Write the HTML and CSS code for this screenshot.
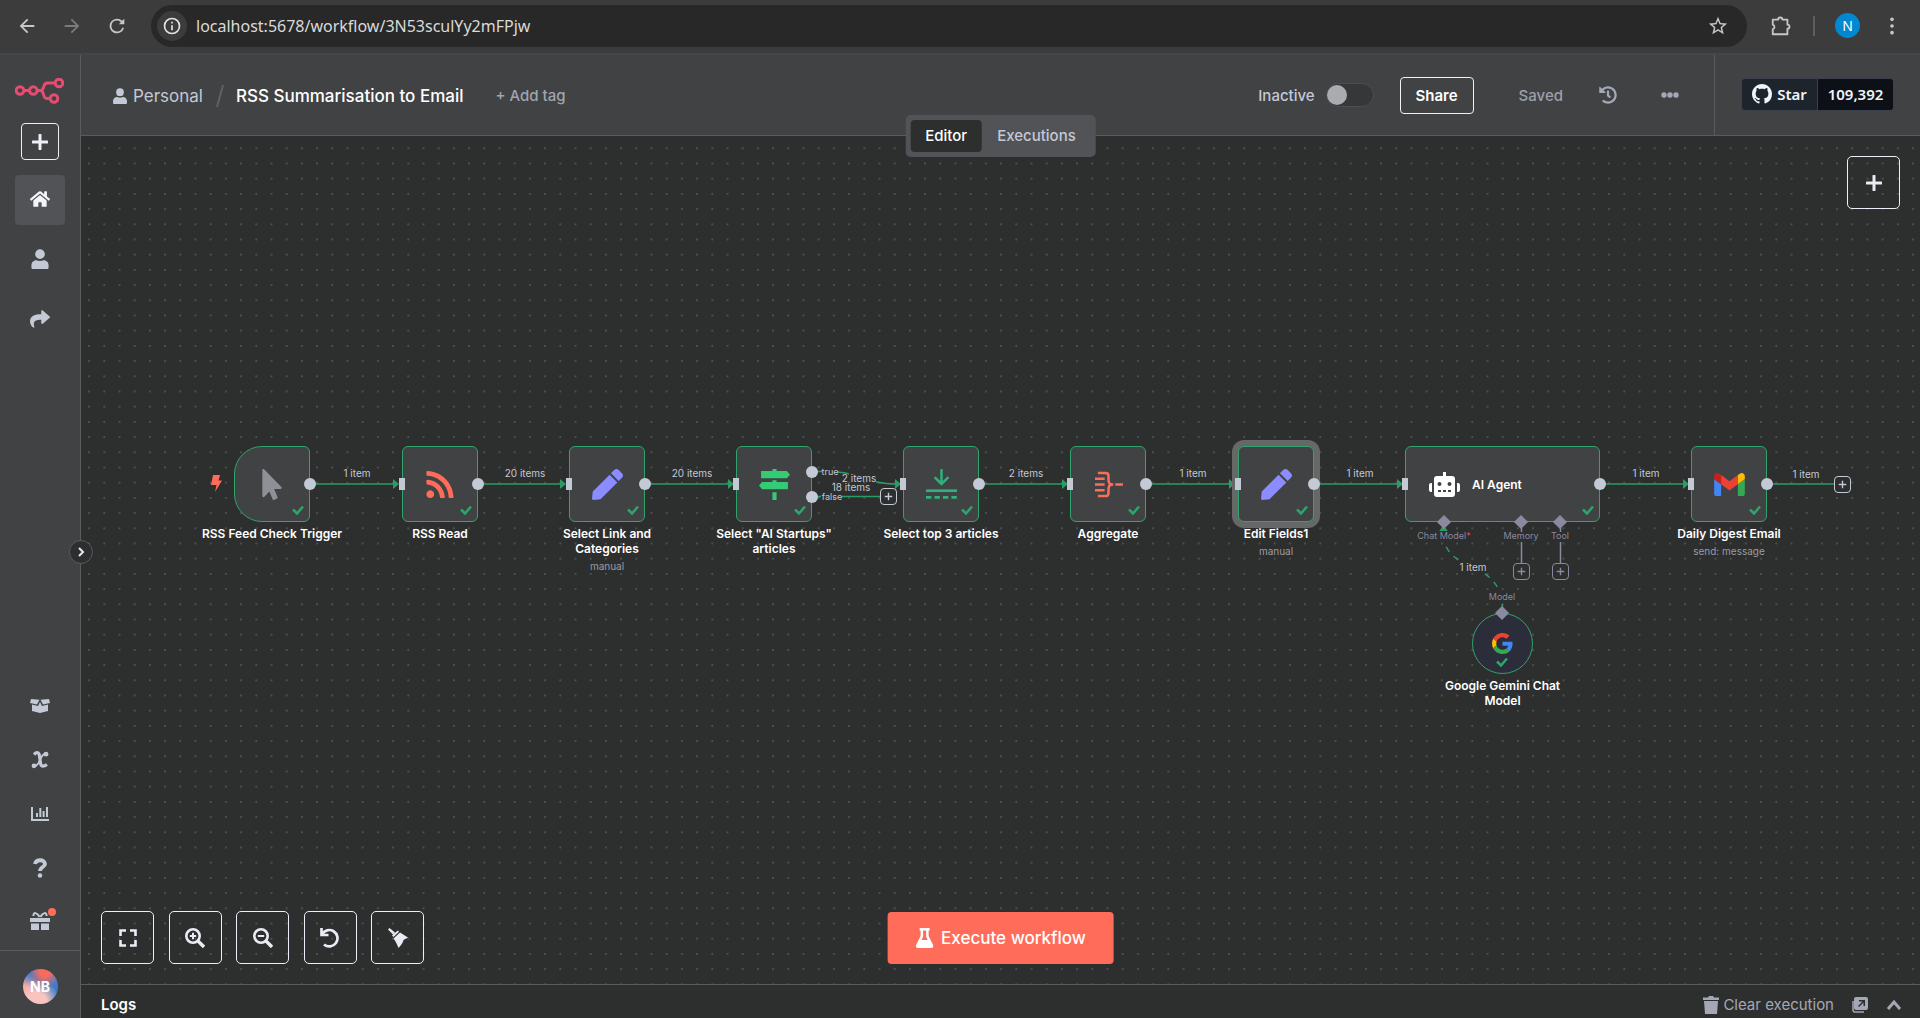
FILE: index.html
```html
<!DOCTYPE html>
<html lang="en">
<head>
<meta charset="utf-8">
<title>RSS Summarisation to Email - n8n</title>
<meta name="viewport" content="width=device-width, initial-scale=1">
<link rel="stylesheet" href="styles.css">
</head>
<body>
<svg class="defs" aria-hidden="true">
  <symbol id="user" viewBox="0 0 448 512"><path d="M224 256a124 124 0 1 0 0-248 124 124 0 0 0 0 248zm95 32c-60 24-130 24-190 0C60 288 0 348 0 422v50c0 24 16 40 40 40h368c24 0 40-16 40-40v-50c0-74-60-134-129-134z"/></symbol>
  <symbol id="plus" viewBox="0 0 16 16"><path d="M8 1v14M1 8h14" fill="none" stroke="currentColor" stroke-width="3" stroke-linecap="round"/></symbol>
  <symbol id="check" viewBox="0 0 12 10"><path d="M1 4.500l4 4 6-7" fill="none" stroke="currentColor" stroke-width="2.500"/></symbol>
  <symbol id="pen" viewBox="0 0 512 512"><path d="M290.740 93.240l128.020 128.020-277.990 277.990-114.140 12.600C11.350 513.540-1.560 500.620.140 485.340l12.700-114.220 277.900-277.880zm207.200-19.060l-60.110-60.110c-18.750-18.750-49.160-18.750-67.910 0l-56.550 56.550 128.020 128.020 56.550-56.550c18.750-18.760 18.750-49.160 0-67.910z"/></symbol>
  <symbol id="smallplus" viewBox="0 0 16 16"><path d="M8 4v8M4 8h8" fill="none" stroke="currentColor" stroke-width="1.500"/></symbol>
</svg>

<header class="browser">
  <button class="nav-btn" aria-label="Back"><svg viewBox="0 0 24 24"><path d="M20 11H7.830l5.590-5.590L12 4l-8 8 8 8 1.410-1.410L7.830 13H20v-2z"/></svg></button>
  <button class="nav-btn disabled" aria-label="Forward"><svg viewBox="0 0 24 24"><path d="M12 4l-1.410 1.410L16.170 11H4v2h12.170l-5.580 5.590L12 20l8-8z"/></svg></button>
  <button class="nav-btn" aria-label="Reload"><svg viewBox="0 0 24 24"><path d="M17.650 6.350A8 8 0 1 0 19.730 14h-2.080A6 6 0 1 1 12 6c1.660 0 3.140.690 4.220 1.780L14 10h6V4z"/></svg></button>
  <div class="address">
    <button class="info" aria-label="Site information"><svg viewBox="0 0 24 24"><path d="M11 17h2v-6h-2v6zm0-8h2V7h-2v2zm1-7a10 10 0 1 0 0 20 10 10 0 0 0 0-20zm0 18a8 8 0 1 1 0-16 8 8 0 0 1 0 16z"/></svg></button>
    <input class="url" type="text" aria-label="Address" value="localhost:5678/workflow/3N53sculYy2mFPjw">
    <button class="nav-btn" aria-label="Bookmark"><svg viewBox="0 0 24 24"><path d="M22 9.240l-7.190-.620L12 2 9.190 8.630 2 9.240l5.460 4.730L5.820 21 12 17.270 18.180 21l-1.630-7.030L22 9.240zM12 15.400l-3.760 2.270 1-4.280-3.320-2.880 4.380-.380L12 6.100l1.710 4.040 4.380.380-3.320 2.880 1 4.280L12 15.400z"/></svg></button>
  </div>
  <button class="nav-btn ext" aria-label="Extensions"><svg viewBox="0 0 24 24"><path d="M3 5h6a2 2 0 0 1 4.500 0H19v5.500a2 2 0 0 1 0 4.500V21H3v-5.500a2.600 2.600 0 0 0 0-5z" fill="none" stroke="currentColor" stroke-width="2" stroke-linejoin="round"/></svg></button>
  <span class="bar-line"></span>
  <button class="profile" aria-label="Profile">N</button>
  <button class="nav-btn menu" aria-label="Menu"><svg viewBox="0 0 24 24"><circle cx="12" cy="4" r="2.200"/><circle cx="12" cy="12" r="2.200"/><circle cx="12" cy="20" r="2.200"/></svg></button>
</header>

<div class="app">
  <aside class="sidebar">
    <a class="logo" href="#" aria-label="n8n"><svg viewBox="0 0 50 26"><g fill="none" stroke="#ea4b71" stroke-width="2.900"><circle cx="5" cy="12.500" r="3.800"/><circle cx="18.300" cy="12.500" r="3.800"/><circle cx="44" cy="5" r="3.800"/><circle cx="39" cy="20.500" r="3.800"/><path d="M9 12.500h5M22.500 12.500h3c5 0 1-7.500 7-7.500h7.500M25.500 12.500c4 0 2 8 6 8H35"/></g></svg></a>
    <button class="new" aria-label="Create"><svg viewBox="0 0 16 16"><use href="#plus"/></svg></button>
    <nav class="side-nav">
      <a class="side-item active" href="#" aria-label="Overview"><svg viewBox="0 0 576 512"><path d="M280.370 148.260L96 300.110V464a16 16 0 0 0 16 16l112.060-.290a16 16 0 0 0 15.920-16V368a16 16 0 0 1 16-16h64a16 16 0 0 1 16 16v95.640a16 16 0 0 0 16 16.050L464 480a16 16 0 0 0 16-16V300L295.670 148.260a12.190 12.190 0 0 0-15.300 0zM571.600 251.470L488 182.560V44.050a12 12 0 0 0-12-12h-56a12 12 0 0 0-12 12v72.610L318.470 43a48 48 0 0 0-61 0L4.340 251.470a12 12 0 0 0-1.600 16.900l25.500 31A12 12 0 0 0 45.150 301l235.220-193.740a12.190 12.190 0 0 1 15.300 0L530.900 301a12 12 0 0 0 16.900-1.600l25.500-31a12 12 0 0 0-1.700-16.930z"/></svg></a>
      <a class="side-item" href="#" aria-label="Personal"><svg viewBox="0 0 448 512"><use href="#user"/></svg></a>
      <a class="side-item" href="#" aria-label="Shared"><svg viewBox="0 0 512 512"><path d="M503.691 189.836L327.687 37.851C312.281 24.546 288 35.347 288 56.015v80.053C127.371 137.907 0 170.100 0 322.326c0 61.441 39.581 122.309 83.333 154.132 13.653 9.931 33.111-2.533 28.077-18.631C66.066 312.814 132.917 274.316 288 272.085V360c0 20.700 24.300 31.453 39.687 18.164l176.004-152c11.071-9.562 11.086-26.753 0-36.328z"/></svg></a>
    </nav>
    <nav class="side-nav lower">
      <a class="side-item" href="#" aria-label="Templates"><svg viewBox="0 0 20 16"><path d="M1 1l8.500.8L7 6.500 0 5zM19 1l-8.500.8L13 6.500 20 5zM2 6.500l6 1.500 2-4 2 4 6-1.500V13l-8 2-8-2z"/></svg></a>
      <a class="side-item" href="#" aria-label="Variables"><svg viewBox="0 0 18 18"><path d="M3 3.500c3-3 5-2 5.500 1.500l1 7c.5 4 3 4 6.500 1.500" fill="none" stroke="currentColor" stroke-width="3.200"/><path d="M3 15.500c3 0 4.500-3 6-6.500s3-6.500 6-6.500" fill="none" stroke="currentColor" stroke-width="1.800"/><circle cx="3" cy="14.800" r="2.400"/><circle cx="15" cy="3.200" r="2.400"/></svg></a>
      <a class="side-item" href="#" aria-label="Insights"><svg viewBox="0 0 18 16"><path d="M1 1v13h17M6 7v4M9.300 2v9M12.600 5v6M16 1v10" fill="none" stroke="currentColor" stroke-width="2"/></svg></a>
      <a class="side-item" href="#" aria-label="Help"><svg viewBox="0 0 16 20"><path d="M3 6c1-5 10-5 10 0 0 3-5 3-5 7" fill="none" stroke="currentColor" stroke-width="3.800"/><circle cx="8" cy="17.500" r="2.300"/></svg></a>
      <a class="side-item gift" href="#" aria-label="What's new"><svg viewBox="0 0 20 20"><path d="M0 6h20v4H0zM1 11.500h8V18H1zM11 11.500h8V18h-8z"/><path d="M9.500 5C7 0 3 0 3.500 4M10.500 5C13 0 17 0 16.500 4" fill="none" stroke="currentColor" stroke-width="2"/></svg><span class="dot"></span></a>
    </nav>
    <div class="account"><button class="avatar" aria-label="Account">NB</button></div>
    <button class="expand" aria-label="Expand sidebar"><svg viewBox="0 0 10 10"><path d="M3 1l4 4-4 4" fill="none" stroke="currentColor" stroke-width="2"/></svg></button>
  </aside>

  <main class="main">
    <div class="topbar">
      <div class="crumbs">
        <a class="personal" href="#"><svg viewBox="0 0 448 512"><use href="#user"/></svg>Personal</a>
        <svg class="slash" viewBox="0 0 8 22"><path d="M7 0L1 22" stroke="#5f6064" stroke-width="2"/></svg>
        <h1 class="title">RSS Summarisation to Email</h1>
        <button class="tag">+ Add tag</button>
      </div>
      <div class="actions">
        <label class="inactive" for="active">Inactive</label>
        <input class="switch" id="active" type="checkbox">
        <button class="share">Share</button>
        <span class="saved">Saved</span>
        <button class="plain history" aria-label="History"><svg viewBox="0 0 512 512"><path d="M504 255.531c.253 136.640-111.180 248.372-247.820 248.468-59.015.042-113.223-20.530-155.822-54.911-11.077-8.940-11.905-25.541-1.839-35.607l11.267-11.267c8.609-8.609 22.353-9.551 31.891-1.984C173.062 425.135 212.781 440 256 440c101.705 0 184-82.311 184-184 0-101.705-82.311-184-184-184-48.814 0-93.149 18.969-126.068 49.932l50.754 50.754c10.080 10.080 2.941 27.314-11.313 27.314H24c-8.837 0-16-7.163-16-16V38.627c0-14.254 17.234-21.393 27.314-11.314l49.372 49.372C129.209 34.136 189.552 8 256 8c136.810 0 247.747 110.780 248 247.531zm-180.912 78.784l9.823-12.630c8.138-10.463 6.253-25.542-4.210-33.679L288 256.349V152c0-13.255-10.745-24-24-24h-16c-13.255 0-24 10.745-24 24v135.651l65.409 50.874c10.463 8.137 25.541 6.253 33.679-4.210z"/></svg></button>
        <button class="plain" aria-label="More"><svg viewBox="0 0 18 18"><circle cx="3" cy="9" r="2.700"/><circle cx="9" cy="9" r="2.700"/><circle cx="15" cy="9" r="2.700"/></svg></button>
      </div>
      <div class="github">
        <a class="gh-star" href="#"><svg viewBox="0 0 16 16"><path d="M8 0C3.580 0 0 3.580 0 8c0 3.540 2.290 6.530 5.470 7.590.4.070.550-.170.550-.380 0-.190-.010-.820-.010-1.490-2.010.370-2.530-.490-2.690-.940-.090-.230-.480-.940-.820-1.130-.280-.150-.680-.520-.010-.530.630-.010 1.080.580 1.230.820.720 1.210 1.870.870 2.330.660.070-.520.280-.870.510-1.070-1.780-.2-3.640-.890-3.640-3.950 0-.870.310-1.590.820-2.150-.080-.2-.360-1.020.080-2.120 0 0 .670-.210 2.200.820.640-.180 1.320-.270 2-.270.680 0 1.360.090 2 .270 1.530-1.040 2.200-.820 2.200-.820.440 1.100.160 1.920.080 2.120.510.560.820 1.270.820 2.150 0 3.070-1.870 3.750-3.650 3.950.290.250.540.730.540 1.480 0 1.070-.010 1.930-.010 2.200 0 .210.150.460.550.380A8.013 8.013 0 0 0 16 8c0-4.420-3.580-8-8-8z"/></svg>Star</a><a class="gh-count" href="#">109,392</a>
      </div>
      <div class="tabs"><button class="tab on">Editor</button><button class="tab">Executions</button></div>
    </div>

    <section class="canvas" aria-label="Workflow canvas">
      <svg class="wires" aria-hidden="true">
        <defs>
          <pattern id="grid" width="20" height="20" patternUnits="userSpaceOnUse" patternTransform="translate(0.500 4.700) scale(0.760)"><circle cx="10" cy="10" r=".8" fill="#8c8e90"/></pattern>
          <marker id="arrow" viewBox="0 0 6 10" refX="0" refY="5" markerWidth="6" markerHeight="10" markerUnits="userSpaceOnUse" orient="auto"><path d="M0 0l6 5-6 5z" fill="#2c9c66"/></marker>
        </defs>
        <rect width="100%" height="100%" fill="url(#grid)"/>
        <g fill="none" stroke="#2c9c66" stroke-width="1.500">
          <path d="M229 348h83" marker-end="url(#arrow)"/>
          <path d="M396 348h83" marker-end="url(#arrow)"/>
          <path d="M564 348h83" marker-end="url(#arrow)"/>
          <path d="M731 335.500h10M757 336c10 1 10 2 11 2M795 346c6 1 12 2 19 2" marker-end="url(#arrow)"/>
          <path d="M731 360.500h9M761 360.500h38"/>
          <path d="M898 348h83" marker-end="url(#arrow)"/>
          <path d="M1065 348h83" marker-end="url(#arrow)"/>
          <path d="M1233 348h83" marker-end="url(#arrow)"/>
          <path d="M1518 348h84" marker-end="url(#arrow)"/>
          <path d="M1686 348h68"/>
          <path d="M1421.500 474C1421 420 1364 440 1362.500 398" stroke-dasharray="6 6"/>
        </g>
        <path d="M1362.500 389l5 7h-10z" fill="#2c9c66"/>
        <path d="M1440.500 392v4M1440.500 406v21M1479.500 392v4M1479.500 406v21" stroke="#8a89a0" stroke-width="1.500"/>
      </svg>

      <svg class="bolt" viewBox="0 0 11 17"><path d="M2 0h7L7.500 5.500H11L4 17l1.500-7H0z"/></svg>

      <article class="node trigger" style="left:153px;top:310px">
        <svg class="icon pointer" viewBox="0 0 320 512"><path d="M302.189 329.126H196.105l55.831 135.993c3.889 9.428-.555 19.999-9.444 23.999l-49.165 21.427c-9.165 4-19.443-.571-23.332-9.714l-53.053-129.136-86.664 89.138C18.729 472.710 0 463.554 0 447.977V18.299C0 1.899 19.921-6.096 30.277 5.443l284.412 292.542c11.472 11.179 3.007 31.141-12.500 31.141z"/></svg>
        <svg class="ok" viewBox="0 0 12 10"><use href="#check"/></svg><i class="out"></i>
        <div class="caption"><b>RSS Feed Check Trigger</b></div>
      </article>
      <article class="node" style="left:321px;top:310px">
        <svg class="icon rss" viewBox="0 0 448 512"><path d="M128.081 415.959c0 35.369-28.672 64.041-64.041 64.041S0 451.328 0 415.959s28.672-64.041 64.041-64.041 64.040 28.673 64.040 64.041zm175.660 47.250c-8.354-154.600-132.185-278.587-286.950-286.950C7.656 175.765 0 183.105 0 192.253v48.069c0 8.415 6.490 15.472 14.887 16.018 111.832 7.284 201.473 96.702 208.772 208.772.547 8.397 7.604 14.887 16.018 14.887h48.069c9.149.001 16.489-7.655 15.995-16.790zm144.249.288C439.596 229.677 251.465 40.445 16.503 32.010 7.473 31.686 0 38.981 0 48.016v48.068c0 8.625 6.835 15.645 15.453 15.999 191.179 7.839 344.627 161.316 352.465 352.465.353 8.618 7.373 15.453 15.999 15.453h48.068c9.034-.001 16.329-7.474 16.005-16.504z"/></svg>
        <svg class="ok" viewBox="0 0 12 10"><use href="#check"/></svg><i class="in"></i><i class="out"></i>
        <div class="caption"><b>RSS Read</b></div>
      </article>
      <article class="node" style="left:488px;top:310px">
        <svg class="icon pen" viewBox="0 0 512 512"><use href="#pen"/></svg>
        <svg class="ok" viewBox="0 0 12 10"><use href="#check"/></svg><i class="in"></i><i class="out"></i>
        <div class="caption"><b>Select Link and Categories</b><small>manual</small></div>
      </article>
      <article class="node" style="left:655px;top:310px">
        <svg class="icon sign" viewBox="0 0 30 30"><path d="M13 0h4v2h10l3 3.500L27 9H2V2h11zM13 11h4v1.500h11v7H3L0 16l3-3.500h10zM13 22.500h4V30h-4z"/></svg>
        <svg class="ok" viewBox="0 0 12 10"><use href="#check"/></svg><i class="in"></i><i class="out high"></i><i class="out low"></i>
        <div class="caption"><b>Select "AI Startups" articles</b></div>
      </article>
      <article class="node" style="left:822px;top:310px">
        <svg class="icon limit" viewBox="0 0 30 30"><g fill="none" stroke="currentColor"><path d="M15 1v13M9 8.500l6 6 6-6" stroke-width="2.400" stroke-linecap="round"/><path d="M0 21h30" stroke-width="2.600"/><path d="M0 27.500h30" stroke-width="2.600" stroke-dasharray="5.200 3"/></g></svg>
        <svg class="ok" viewBox="0 0 12 10"><use href="#check"/></svg><i class="in"></i><i class="out"></i>
        <div class="caption"><b>Select top 3 articles</b></div>
      </article>
      <article class="node" style="left:989px;top:310px">
        <svg class="icon agg" viewBox="0 0 30 28"><path d="M4 2h8c2.500 0 3 1 3 3v4c0 3 1 5 4 5-3 0-4 2-4 5v4c0 2-.5 3-3 3H4M1 8h10M1 14h10M1 20h10M22 14h8M16 14h4" fill="none" stroke="currentColor" stroke-width="2.600"/></svg>
        <svg class="ok" viewBox="0 0 12 10"><use href="#check"/></svg><i class="in"></i><i class="out"></i>
        <div class="caption"><b>Aggregate</b></div>
      </article>
      <article class="node selected" style="left:1157px;top:310px">
        <svg class="icon pen" viewBox="0 0 512 512"><use href="#pen"/></svg>
        <svg class="ok" viewBox="0 0 12 10"><use href="#check"/></svg><i class="in"></i><i class="out"></i>
        <div class="caption"><b>Edit Fields1</b><small>manual</small></div>
      </article>
      <article class="node agent" style="left:1324px;top:310px">
        <svg class="icon robot" viewBox="0 0 31 25"><path fill-rule="evenodd" d="M14 0h3v4h6a3 3 0 0 1 3 3v15a3 3 0 0 1-3 3H8a3 3 0 0 1-3-3V7a3 3 0 0 1 3-3h6zM10.500 10a2 2 0 1 0 0 4 2 2 0 0 0 0-4zm10 0a2 2 0 1 0 0 4 2 2 0 0 0 0-4zM9 18v2h3v-2zm5 0v2h3v-2zm5 0v2h3v-2zM3 11v9H2a2 2 0 0 1-2-2v-5a2 2 0 0 1 2-2zm25 0v9h1a2 2 0 0 0 2-2v-5a2 2 0 0 0-2-2z"/></svg>
        <b class="name">AI Agent</b>
        <svg class="ok" viewBox="0 0 12 10"><use href="#check"/></svg><i class="in"></i><i class="out"></i>
      </article>
      <article class="node" style="left:1610px;top:310px">
        <svg class="icon gmail" viewBox="52 42 88 66"><path fill="#4285f4" d="M58 108h14V74L52 59v43c0 3.320 2.690 6 6 6"/><path fill="#34a853" d="M120 108h14c3.320 0 6-2.690 6-6V59l-20 15"/><path fill="#fbbc04" d="M120 48v26l20-15v-8c0-7.420-8.470-11.650-14.400-7.200"/><path fill="#ea4335" d="M72 74V48l24 18 24-18v26L96 92"/><path fill="#c5221f" d="M52 51v8l20 15V48l-5.600-4.200c-5.940-4.450-14.400-.220-14.400 7.200"/></svg>
        <svg class="ok" viewBox="0 0 12 10"><use href="#check"/></svg><i class="in"></i><i class="out"></i>
        <div class="caption"><b>Daily Digest Email</b><small>send: message</small></div>
      </article>
      <article class="node model" style="left:1391px;top:477px">
        <svg class="icon google" viewBox="0 0 48 48"><path fill="#ea4335" d="M24 9.500c3.540 0 6.710 1.220 9.210 3.600l6.850-6.850C35.900 2.380 30.470 0 24 0 14.620 0 6.510 5.380 2.560 13.220l7.980 6.190C12.430 13.720 17.740 9.500 24 9.500z"/><path fill="#4285f4" d="M46.980 24.550c0-1.570-.150-3.090-.380-4.550H24v9.020h12.940c-.580 2.960-2.260 5.480-4.780 7.180l7.730 6c4.510-4.180 7.090-10.360 7.090-17.650z"/><path fill="#fbbc05" d="M10.530 28.590c-.480-1.450-.760-2.990-.760-4.590s.270-3.140.760-4.590l-7.980-6.190C.920 16.460 0 20.120 0 24c0 3.880.920 7.540 2.560 10.780l7.970-6.190z"/><path fill="#34a853" d="M24 48c6.480 0 11.930-2.130 15.890-5.810l-7.730-6c-2.150 1.450-4.920 2.300-8.160 2.300-6.260 0-11.570-4.220-13.470-9.910l-7.980 6.190C6.510 42.620 14.620 48 24 48z"/></svg>
        <svg class="ok" viewBox="0 0 12 10"><use href="#check"/></svg>
        <div class="caption"><b>Google Gemini Chat Model</b></div>
      </article>

      <span class="label" style="left:276px;top:337px">1 item</span>
      <span class="label" style="left:444px;top:337px">20 items</span>
      <span class="label" style="left:611px;top:337px">20 items</span>
      <span class="label" style="left:778px;top:342px">2 items</span>
      <span class="label" style="left:770px;top:351px">18 items</span>
      <span class="label port" style="left:749px;top:336px">true</span>
      <span class="label port" style="left:751px;top:361px">false</span>
      <span class="label" style="left:945px;top:337px">2 items</span>
      <span class="label" style="left:1112px;top:337px">1 item</span>
      <span class="label" style="left:1279px;top:337px">1 item</span>
      <span class="label" style="left:1565px;top:337px">1 item</span>
      <span class="label" style="left:1725px;top:338px">1 item</span>
      <span class="label masked" style="left:1392px;top:431px">1 item</span>
      <span class="label sub masked" style="left:1363px;top:400px">Chat Model<em>*</em></span>
      <span class="label sub" style="left:1440px;top:400px">Memory</span>
      <span class="label sub" style="left:1479px;top:400px">Tool</span>
      <span class="label sub masked" style="left:1421px;top:461px">Model</span>

      <i class="gem" style="left:1363px;top:386px"></i>
      <i class="gem" style="left:1440px;top:386px"></i>
      <i class="gem" style="left:1479px;top:386px"></i>
      <i class="gem" style="left:1421px;top:477px"></i>

      <button class="add" style="left:807px;top:360px" aria-label="Add node"><svg viewBox="0 0 16 16"><use href="#smallplus"/></svg></button>
      <button class="add" style="left:1761px;top:348px" aria-label="Add node"><svg viewBox="0 0 16 16"><use href="#smallplus"/></svg></button>
      <button class="add dim" style="left:1440px;top:435px" aria-label="Add memory"><svg viewBox="0 0 16 16"><use href="#smallplus"/></svg></button>
      <button class="add dim" style="left:1479px;top:435px" aria-label="Add tool"><svg viewBox="0 0 16 16"><use href="#smallplus"/></svg></button>

      <button class="tool create" aria-label="Add node to canvas"><svg viewBox="0 0 16 16"><use href="#plus"/></svg></button>
      <div class="toolbar">
        <button class="tool" aria-label="Fit view"><svg viewBox="0 0 18 18"><path d="M1.500 7V1.500H7M11 1.500h5.500V7M16.500 11v5.500H11M7 16.500H1.500V11" fill="none" stroke="currentColor" stroke-width="2.600"/></svg></button>
        <button class="tool" aria-label="Zoom in"><svg viewBox="0 0 20 20"><g fill="none" stroke="currentColor"><circle cx="8" cy="8" r="6.700" stroke-width="2.600"/><path d="M13 13l6 6" stroke-width="3.400"/><path d="M8 4.800v6.400M4.800 8h6.400" stroke-width="2"/></g></svg></button>
        <button class="tool" aria-label="Zoom out"><svg viewBox="0 0 20 20"><g fill="none" stroke="currentColor"><circle cx="8" cy="8" r="6.700" stroke-width="2.600"/><path d="M13 13l6 6" stroke-width="3.400"/><path d="M4.800 8h6.400" stroke-width="2"/></g></svg></button>
        <button class="tool" aria-label="Reset zoom"><svg viewBox="0 0 20 20"><path d="M1.500 0v7h7M2 6.500A8.200 8.200 0 1 1 4 16.500" fill="none" stroke="currentColor" stroke-width="2.700"/></svg></button>
        <button class="tool" aria-label="Tidy up"><svg viewBox="0 0 20 20"><path d="M0 1.500L1.500 0l5.500 4.500-2 2zM8 4l2-1.500 1 1.200L5.500 9 4 7.500zM12 4.500l8 5c-2 1-2.500 1.500-4.500 2.500-.5 2.500-2 5-5 8-1.500-4-3-7-5-9.500z"/></svg></button>
      </div>
      <button class="execute"><svg viewBox="0 0 18 20"><path d="M4 0h10v2.500h-1V8l4.500 9c.8 1.800-.3 3-2 3h-13c-1.700 0-2.800-1.200-2-3L5 8V2.500H4zM7.500 2.500v6L6 12h6l-1.500-3.500v-6z" fill-rule="evenodd"/></svg>Execute workflow</button>
    </section>

    <footer class="logs">
      <h2>Logs</h2>
      <button class="clear"><svg viewBox="0 0 16 18"><path d="M0 1.500h5L6 0h4l1 1.500h5V4H0zM1 5h14l-1 13H2z"/></svg>Clear execution</button>
      <button class="plain" aria-label="Pop out"><svg viewBox="0 0 16 16"><path fill-rule="evenodd" d="M4 0h10a2 2 0 0 1 2 2v9a2 2 0 0 1-2 2H4a2 2 0 0 1-2-2V2a2 2 0 0 1 2-2zm3 3v1.500h3.500L6 9l1 1 4.500-4.500V9H13V3z"/><path d="M1 4v9a2 2 0 0 0 2 2h9" fill="none" stroke="currentColor" stroke-width="1.500"/></svg></button>
      <button class="plain" aria-label="Open logs"><svg viewBox="0 0 16 16"><path d="M2 12l6-7 6 7" fill="none" stroke="currentColor" stroke-width="3"/></svg></button>
    </footer>
  </main>
</div>
</body>
</html>
```
FILE: styles.css
```css
* { box-sizing: border-box; }
html, body { height: 100%; }
body {
  margin: 0;
  display: flex;
  flex-direction: column;
  background: #2d2e2e;
  color: #c3c9d5;
  font-family: Inter, sans-serif;
  font-size: 16px;
  overflow: hidden;
}
button {
  padding: 0;
  border: 0;
  background: none;
  color: inherit;
  font: inherit;
  display: flex;
  align-items: center;
  justify-content: center;
}
a { color: inherit; text-decoration: none; }
h1, h2 { margin: 0; }
svg { fill: currentColor; display: block; flex: none; }
.defs { position: absolute; width: 0; height: 0; }

/* browser toolbar */
.browser {
  flex: none;
  height: 55px;
  padding: 0 16px 2px;
  display: flex;
  align-items: center;
  background: #3c3c3c;
  border-bottom: 2px solid #454648;
  color: #c7c7c7;
  font-family: "Noto Sans", sans-serif;
}
.nav-btn { width: 22px; height: 22px; margin-right: 23px; }
.nav-btn svg { width: 22px; height: 22px; }
.nav-btn.disabled { color: #7b7b7b; }
.address {
  flex: 1;
  height: 42px;
  display: flex;
  align-items: center;
  padding-left: 6px;
  border-radius: 21px;
  background: #282828;
}
.address .nav-btn { margin-right: 18px; }
.info { width: 30px; height: 30px; border-radius: 50%; background: #3c3c3c; color: #e3e3e3; }
.info svg { width: 20px; height: 20px; }
.url {
  flex: 1;
  min-width: 0;
  margin-left: 9px;
  padding: 0;
  border: 0;
  outline: 0;
  background: none;
  color: #dadada;
  font: 16px "Noto Sans", sans-serif;
}
.browser .ext { margin: 0 21px 0 23px; }
.bar-line { width: 2px; height: 20px; background: #5e5e5e; }
.profile {
  width: 25px;
  height: 25px;
  margin-left: 20px;
  border-radius: 50%;
  background: #0288d1;
  color: #fff;
  font-size: 14px;
}
.browser .menu { margin: 0 2px 0 22px; width: 20px; }
.browser .menu svg { width: 20px; height: 20px; }

.app { flex: 1; min-height: 0; display: flex; }

/* sidebar */
.sidebar {
  position: relative;
  flex: none;
  width: 81px;
  display: flex;
  flex-direction: column;
  align-items: center;
  padding-top: 23px;
  background: #414244;
  border-right: 1px solid #5a5b5e;
}
.logo svg { width: 50px; height: 26px; }
.new {
  width: 38px;
  height: 37px;
  margin: 19px 0 15px;
  border: 1px solid #eef0f6;
  border-radius: 4px;
  color: #eceef8;
}
.new svg { width: 16px; height: 16px; }
.side-nav { display: flex; flex-direction: column; gap: 10px; }
.side-item {
  position: relative;
  width: 50px;
  height: 50px;
  padding-bottom: 2px;
  display: flex;
  align-items: center;
  justify-content: center;
  border-radius: 4px;
}
.side-item svg { width: 20px; height: 20px; }
.side-item.active { background: #525356; color: #f4f5fb; }
.lower { margin-top: auto; margin-bottom: 5px; }
.lower .side-item { height: 44px; }
.lower .side-item svg { width: 18px; }
.lower .side-item:first-child svg, .lower .gift svg { width: 20px; }
.dot {
  position: absolute;
  top: 7px;
  right: 9px;
  width: 8px;
  height: 8px;
  border-radius: 50%;
  background: #ff6d5a;
}
.account {
  width: 100%;
  padding: 18px 0 14px;
  border-top: 1px solid #5a5b5e;
  display: flex;
  justify-content: center;
}
.avatar {
  width: 35px;
  height: 35px;
  border-radius: 50%;
  background:
    radial-gradient(circle at 62% 8%, #f96c5c 12%, transparent 42%),
    radial-gradient(circle at 40% 95%, #f8c4bf 25%, transparent 58%),
    radial-gradient(circle at 0 65%, #f3a7a2 15%, transparent 45%),
    #3d7cc9;
  color: #fff;
  font-size: 14px;
  font-weight: 700;
}
.expand {
  position: absolute;
  z-index: 3;
  right: -13px;
  top: 485px;
  width: 24px;
  height: 24px;
  border: 1px solid #5a5b5e;
  border-radius: 50%;
  background: #2d2e2e;
  color: #e6e8f0;
}
.expand svg { width: 10px; height: 10px; }

/* workflow header */
.main { flex: 1; min-width: 0; display: flex; flex-direction: column; }
.topbar {
  position: relative;
  z-index: 2;
  flex: none;
  height: 81px;
  display: flex;
  background: #414244;
  border-bottom: 1px solid #5a5b5e;
}
.crumbs, .actions, .github { display: flex; align-items: center; }
.crumbs { flex: 1; padding: 1px 0 0 32px; }
.personal { display: flex; align-items: center; gap: 6px; font-size: 17px; }
.personal svg { width: 14px; height: 16px; }
.slash { width: 8px; height: 22px; margin: 0 12px 0 13px; }
.title { font-size: 17px; font-weight: 500; color: #fff; }
.tag { margin-left: 32px; font-size: 15px; font-weight: 500; color: #a0a4b0; }
.actions { padding-right: 35px; font-size: 15px; font-weight: 500; }
.switch {
  appearance: none;
  width: 48px;
  height: 24px;
  margin: 0 26px 0 11px;
  border: 1px solid #4c4d50;
  border-radius: 12px;
  background: #363739;
  display: flex;
  align-items: center;
}
.switch::before { content: ""; width: 20px; height: 20px; border-radius: 50%; background: #aaabae; }
.share {
  width: 74px;
  height: 37px;
  border: 1px solid #f0f1f7;
  border-radius: 4px;
  color: #fff;
  font-weight: 600;
}
.saved { margin-left: 45px; color: #9da0aa; font-weight: 500; }
.plain { color: #a4a8b6; }
.actions .plain { margin-left: 44px; }
.actions .history { margin-left: 36px; }
.actions .plain svg { width: 18px; height: 18px; }
.github {
  padding: 0 26px 2px;
  border-left: 1px solid #5a5b5e;
  font: 600 15px "Noto Sans", sans-serif;
  color: #f0f4fa;
}
.gh-star, .gh-count {
  height: 33px;
  display: flex;
  align-items: center;
  justify-content: center;
  border: 1px solid #3a414c;
}
.gh-star { width: 77px; gap: 5px; background: #1e242c; border-radius: 4px 0 0 4px; }
.gh-star svg { width: 20px; height: 20px; }
.gh-count { width: 76px; border-left: 0; background: #0d1117; border-radius: 0 4px 4px 0; }
.tabs {
  position: absolute;
  top: 60px;
  left: 50%;
  transform: translateX(-50%);
  display: flex;
  padding: 5px;
  border-radius: 5px;
  background: #525356;
  font-size: 15px;
  font-weight: 500;
}
.tab { height: 32px; padding: 0 15px 1px; border-radius: 4px; }
.tab.on { background: #2d2e2e; color: #fff; }

/* canvas */
.canvas { position: relative; flex: 1; min-height: 0; overflow: hidden; background: #2d2e2e; }
.wires { position: absolute; inset: 0; width: 100%; height: 100%; fill: none; }
.bolt { position: absolute; left: 130px; top: 339px; width: 11px; height: 17px; color: #ff6d5a; }
.node {
  position: absolute;
  width: 76px;
  height: 76px;
  display: flex;
  align-items: center;
  justify-content: center;
  border: 1px solid #2fa56b;
  border-radius: 6px;
  background: #414244;
}
.trigger { border-radius: 28px 6px 6px 28px; }
.selected { box-shadow: 0 0 0 6px #666767; }
.agent { width: 195px; justify-content: flex-start; padding-left: 23px; gap: 12px; color: #fff; }
.agent .name { font-size: 12px; font-weight: 600; }
.model { width: 61px; height: 61px; border-radius: 50%; background: #2b2d3a; }
.icon { width: 31px; height: 31px; }
.pointer { width: 20px; color: #8f9095; }
.rss { width: 28px; color: #ff6d5a; }
.pen { color: #8a8cff; }
.sign { color: #35cb75; }
.limit { color: #2fb07c; }
.agg { width: 29px; height: 27px; color: #ff6d5a; }
.robot { height: 25px; }
.gmail { height: 23px; }
.google { width: 21px; height: 21px; }
.ok { position: absolute; right: 5px; bottom: 6px; width: 12px; height: 10px; color: #2fa56b; }
.model .ok { right: 24px; bottom: 6px; }
.in, .out, .gem { position: absolute; background: #c3c9d5; }
.in { left: -4px; top: 31px; width: 6px; height: 12px; }
.out { right: -7px; top: 31px; width: 12px; height: 12px; border-radius: 50%; }
.out.high { top: 19px; }
.out.low { top: 44px; }
.gem { width: 10px; height: 10px; margin: -5px; background: #8a89a0; transform: rotate(45deg); }
.caption {
  position: absolute;
  top: 100%;
  left: 50%;
  width: 146px;
  margin: 5px 0 0 -73px;
  text-align: center;
  color: #fff;
  font-size: 12px;
  line-height: 15px;
}
.caption b { display: block; font-weight: 600; }
.caption small { display: block; margin-top: 4px; font-size: 10px; line-height: 12px; color: #9a9ca4; }
.label {
  position: absolute;
  transform: translate(-50%, -50%);
  font-size: 10px;
  line-height: 12px;
  white-space: nowrap;
  color: #c3c9d5;
}
.port, .sub { font-size: 9px; }
.sub { color: #8a89a0; line-height: 10px; }
.sub em { color: #f04a4a; font-style: normal; }
.masked { background: #2d2e2e; }
.add {
  position: absolute;
  width: 17px;
  height: 17px;
  margin: -8px;
  border: 1px solid currentColor;
  border-radius: 4px;
  background: #2d2e2e;
  color: #c3c9d5;
}
.add svg { width: 15px; height: 15px; }
.add.dim { color: #8a89a0; }
.tool {
  width: 53px;
  height: 53px;
  border: 1px solid #eceef8;
  border-radius: 5px;
  color: #e9ebf5;
}
.tool svg { width: 20px; height: 20px; }
.tool:first-child svg { width: 18px; height: 18px; }
.create { position: absolute; top: 20px; right: 20px; }
.create svg { width: 16px; height: 16px; }
.toolbar {
  position: absolute;
  left: 20px;
  bottom: 20px;
  width: 323px;
  display: flex;
  justify-content: space-between;
}
.execute {
  position: absolute;
  left: 50%;
  bottom: 20px;
  transform: translateX(-50%);
  height: 52px;
  padding: 0 28px;
  gap: 8px;
  border-radius: 4px;
  background: #ff6d5a;
  color: #fff;
  font-size: 17px;
  font-weight: 500;
  white-space: nowrap;
}
.execute svg { width: 18px; height: 20px; }

/* logs */
.logs {
  flex: none;
  height: 34px;
  padding: 6px 18px 0 20px;
  display: flex;
  align-items: center;
  border-top: 1px solid #5a5b5e;
}
.logs h2 { margin-right: auto; font-size: 15px; font-weight: 600; color: #fff; }
.clear { gap: 4px; font-size: 15px; color: #a4a8b6; }
.clear svg { width: 16px; height: 18px; }
.logs .plain { margin-left: 18px; }
.logs .plain svg { width: 16px; height: 16px; }
```
